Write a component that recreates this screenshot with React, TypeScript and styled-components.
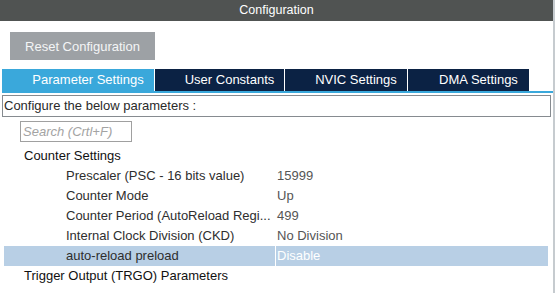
import * as React from 'react';
import styled, { createGlobalStyle } from 'styled-components';

const GlobalStyle = createGlobalStyle`
  html, body {
    margin: 0;
    padding: 0;
    background: #ffffff;
  }
  body {
    font-family: 'Liberation Sans', Arial, sans-serif;
    font-size: 13px;
  }
`;

type Param = { label: string; value: string; selected?: boolean };

const tabs = ['Parameter Settings', 'User Constants', 'NVIC Settings', 'DMA Settings'];
const tabWidths = [152, 129, 122, 121];

const params: Param[] = [
  { label: 'Prescaler (PSC - 16 bits value)', value: '15999' },
  { label: 'Counter Mode', value: 'Up' },
  { label: 'Counter Period (AutoReload Regi...', value: '499' },
  { label: 'Internal Clock Division (CKD)', value: 'No Division' },
  { label: 'auto-reload preload', value: 'Disable', selected: true },
];

export default function App() {
  const [activeTab, setActiveTab] = React.useState(0);

  return (
    <>
      <GlobalStyle />
      <Frame>
        <TitleBar>Configuration</TitleBar>
        <Toolbar>
          <ResetButton>Reset Configuration</ResetButton>
        </Toolbar>
        <TabBar>
          {tabs.map((tab, i) => (
            <Tab
              key={tab}
              $active={i === activeTab}
              $width={tabWidths[i]}
              onClick={() => setActiveTab(i)}
            >
              {tab}
            </Tab>
          ))}
        </TabBar>
        <Body>
          <HeaderBox>Configure the below parameters :</HeaderBox>
          <SearchWrap>
            <SearchInput placeholder="Search (Crtl+F)" />
          </SearchWrap>
          <Tree>
            <GroupRow>Counter Settings</GroupRow>
            {params.map((p) => (
              <ParamRow key={p.label} $selected={!!p.selected}>
                <ParamLabel>{p.label}</ParamLabel>
                <ParamValue $selected={!!p.selected}>{p.value}</ParamValue>
              </ParamRow>
            ))}
            <GroupRow>Trigger Output (TRGO) Parameters</GroupRow>
          </Tree>
        </Body>
      </Frame>
    </>
  );
}

const Frame = styled.div`
  width: 553px;
  min-height: 100vh;
  border-right: 2px solid #c6cbcf;
  background: #ffffff;
`;

const TitleBar = styled.div`
  height: 21px;
  line-height: 21px;
  background: #505352;
  color: #ffffff;
  text-align: center;
  font-size: 12.5px;
`;

const Toolbar = styled.div`
  padding: 11px 10px 9px;
`;

const ResetButton = styled.button`
  display: block;
  width: 145px;
  height: 28px;
  border: none;
  margin: 0;
  padding: 0;
  background: #9da1a5;
  color: #f4f5f6;
  font-family: 'Liberation Sans', Arial, sans-serif;
  font-size: 13px;
  cursor: pointer;
`;

const TabBar = styled.div`
  display: flex;
  gap: 1px;
  margin-left: 2px;
  border-bottom: 2px solid #3aa8db;
`;

const Tab = styled.div<{ $active: boolean; $width: number }>`
  width: ${({ $width }) => `${$width}px`};
  height: 22px;
  line-height: 22px;
  padding-left: 20px;
  box-sizing: border-box;
  text-align: center;
  color: #ffffff;
  font-size: 13px;
  white-space: nowrap;
  background: ${({ $active }) => ($active ? '#3aa8db' : '#0b2244')};
  cursor: pointer;
`;

const Body = styled.div`
  padding: 2px 2px 0;
`;

const HeaderBox = styled.div`
  height: 22px;
  line-height: 20px;
  box-sizing: border-box;
  border: 1px solid #868b90;
  padding-left: 1px;
  color: #2a2a2a;
  font-size: 13px;
`;

const SearchWrap = styled.div`
  padding: 4px 0 0 18px;
`;

const SearchInput = styled.input`
  display: block;
  width: 112px;
  height: 21px;
  box-sizing: border-box;
  margin: 0;
  border: 1px solid #a0a0a0;
  padding: 0 2px;
  outline: none;
  font-family: 'Liberation Sans', Arial, sans-serif;
  font-size: 13px;
  &::placeholder {
    color: #a3a3a3;
    font-style: italic;
  }
`;

const Tree = styled.div`
  margin-top: 4px;
`;

const GroupRow = styled.div`
  height: 20px;
  line-height: 20px;
  padding-left: 22px;
  color: #111111;
  font-size: 13px;
`;

const ParamRow = styled.div<{ $selected: boolean }>`
  display: grid;
  grid-template-columns: 271px 1fr;
  height: 20px;
  line-height: 20px;
  margin: 0 3px 0 2px;
  background: ${({ $selected }) => ($selected ? '#b8cfe5' : 'transparent')};
  font-size: 13px;
`;

const ParamLabel = styled.div`
  padding-left: 62px;
  color: #2e2e2e;
  white-space: nowrap;
  overflow: hidden;
`;

const ParamValue = styled.div<{ $selected: boolean }>`
  padding-left: 1px;
  border-left: 1px solid ${({ $selected }) => ($selected ? '#ffffff' : 'transparent')};
  color: ${({ $selected }) => ($selected ? '#ffffff' : '#555555')};
  white-space: nowrap;
`;
